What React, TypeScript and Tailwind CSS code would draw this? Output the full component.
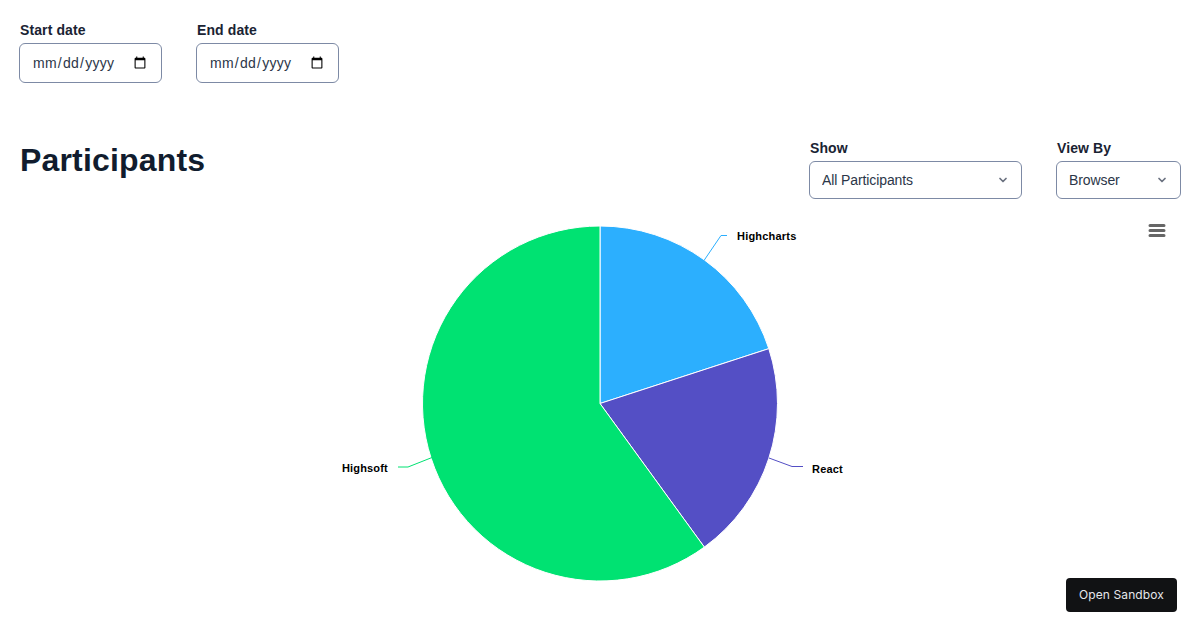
import { ChevronDown } from "lucide-react";

const FONT = "font-['Liberation_Sans',Arial,sans-serif]";

const CX = 600;
const CY = 403.5;
const R = 177.5;

function point(deg: number) {
  const a = (deg * Math.PI) / 180;
  return `${(CX + R * Math.sin(a)).toFixed(2)} ${(CY - R * Math.cos(a)).toFixed(2)}`;
}

function slice(from: number, to: number) {
  const large = to - from > 180 ? 1 : 0;
  return `M${CX} ${CY}L${point(from)}A${R} ${R} 0 ${large} 1 ${point(to)}Z`;
}

const SLICES = [
  { from: 0, to: 72, color: "#2caffe" },
  { from: 72, to: 144, color: "#544fc5" },
  { from: 144, to: 360, color: "#00e272" },
];

function DateField({ label }: { label: string }) {
  return (
    <div className="flex flex-col">
      <label className="pl-px text-sm leading-[20px] font-bold tracking-[0.1px] text-[#1a2333] mb-[3px]">
        {label}
      </label>
      <input
        type="date"
        className="w-[143px] h-[40px] pl-[12px] pr-[12px] text-sm tracking-[0.25px] text-[#2b3648] bg-white border border-[#7d8aa5] rounded-md outline-none"
      />
    </div>
  );
}

function SelectField({
  label,
  value,
  width,
}: {
  label: string;
  value: string;
  width: string;
}) {
  return (
    <div className="flex flex-col">
      <label className="pl-px text-sm leading-[20px] font-bold tracking-[0.1px] text-[#1a2333] mb-[3px]">
        {label}
      </label>
      <div className={`relative ${width}`}>
        <select className="w-full h-[38px] pl-[12px] text-sm tracking-[-0.1px] text-[#2b3648] bg-white border border-[#7d8aa5] rounded-md outline-none appearance-none">
          <option>{value}</option>
        </select>
        <ChevronDown
          className="absolute right-[13px] top-[13px] size-3 text-[#6b7280]"
          strokeWidth={3.5}
        />
      </div>
    </div>
  );
}

export default function App() {
  return (
    <div className={`relative w-[1200px] h-[630px] overflow-hidden bg-white ${FONT}`}>
      <div className="pl-[19px] pr-[19px] pt-[20px]">
        {/* Date range */}
        <div className="flex gap-[34px]">
          <DateField label="Start date" />
          <DateField label="End date" />
        </div>

        {/* Title + filters */}
        <div className="flex justify-between items-start mt-[55px]">
          <h1 className="pl-px pt-[2px] text-[32px] leading-[40px] font-bold tracking-[0.17px] text-[#111c2e]">
            Participants
          </h1>
          <div className="flex gap-[34px]">
            <SelectField label="Show" value="All Participants" width="w-[213px]" />
            <SelectField label="View By" value="Browser" width="w-[125px]" />
          </div>
        </div>
      </div>

      {/* Pie chart */}
      <svg className="block mt-[8px]" width="1200" height="423" viewBox="0 207 1200 423">
        {SLICES.map((s) => (
          <path
            key={s.color}
            d={slice(s.from, s.to)}
            fill={s.color}
            stroke="#ffffff"
            strokeWidth="1"
            strokeLinejoin="round"
          />
        ))}
        <path d="M704 260.500L721 235.500H727" fill="none" stroke="#2caffe" strokeWidth="1" />
        <path d="M769 458L792 466.500H803" fill="none" stroke="#544fc5" strokeWidth="1" />
        <path d="M432 457.500L408 467H398" fill="none" stroke="#00e272" strokeWidth="1" />
        <text x="737" y="240" fontSize="11" fontWeight="700" fill="#000000" className="tracking-[0.2px]">
          Highcharts
        </text>
        <text x="812" y="473" fontSize="11" fontWeight="700" fill="#000000" className="tracking-[0.2px]">
          React
        </text>
        <text x="342" y="472" fontSize="11" fontWeight="700" fill="#000000" className="tracking-[0.15px]">
          Highsoft
        </text>
        <path
          d="M1150 225.500H1164M1150 230.500H1164M1150 235.500H1164"
          fill="none"
          stroke="#666666"
          strokeWidth="3"
          strokeLinecap="round"
        />
      </svg>

      <button className="absolute left-[1066px] top-[578px] w-[111px] h-[34px] rounded bg-[#111214] text-xs tracking-[0.1px] text-[#e5e7eb] font-['Inter',sans-serif]">
        Open Sandbox
      </button>
    </div>
  );
}
